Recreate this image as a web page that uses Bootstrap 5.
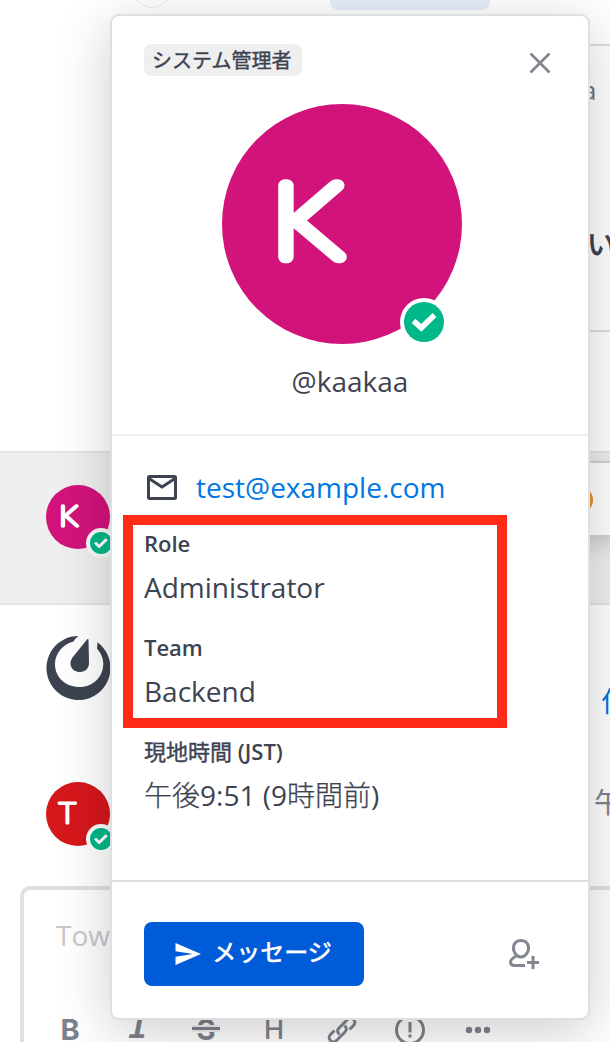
<!DOCTYPE html>
<html lang="ja">
<head>
<meta charset="utf-8">
<meta name="viewport" content="width=device-width, initial-scale=1">
<title>プロフィール</title>
<link rel="stylesheet" href="https://cdn.jsdelivr.net/npm/bootstrap@5.3.0/dist/css/bootstrap.min.css">
<style>
body{font-family:"Open Sans","Noto Sans CJK JP",sans-serif;font-size:28px;line-height:40px;color:#3d4350;background:#fff}
svg{display:block;flex:none}
.channel{height:1042px}
.thread-top{height:451px}
.reply-count{width:160px;height:10px;margin-left:330px;background:#e8effa;border-radius:0 0 8px 8px}
.ghost-icon{left:132px;top:-32px;width:40px;height:40px;border:1px solid #eee}
.quote{height:288px;margin-top:34px;margin-left:560px;border-top:2px solid #dcdddf;border-bottom:2px solid #dcdddf}
.who{font-size:26px;color:#6f747e;padding-left:22px;padding-top:24px;line-height:40px}
.headline{font-weight:400;-webkit-text-stroke:1px #3d4350;font-size:28px;padding-left:27px;padding-top:114px;line-height:40px}
.hovered{height:154px;background:#efefef;border-top:2px solid #e3e4e6;border-bottom:2px solid #e3e4e6;padding:32px 0 0 46px}
.post-mm{height:147px;padding:31px 0 0 46px}
.post-t{height:134px;padding:30px 0 0 46px}
.ava{width:64px;height:64px}
.state-sm{left:40px;top:43px}
.post-t .state-sm{top:42px}
.actions{width:60px;height:76px;margin-top:-24px;margin-right:-10px;background:#fff;border:2px solid #d0d1d6;box-shadow:0 8px 18px rgba(0,0,0,.14);padding-top:24px;padding-left:5px}
.emoji{width:26px;height:26px;background:radial-gradient(circle,#ffc34a 30%,#e8861c 70%)}
.clip-link{color:#0076e4;width:9px;margin-top:45px}
.clip-time{color:#7d828c;width:16px}
.composer{height:170px;margin-left:20px;margin-right:-20px;border:4px solid #dfe0e2;border-radius:10px;padding:23px 0 0 32px}
.hint{color:#c7c8ca;line-height:44px}
.tools{height:40px;margin-top:53px;color:#7d828c;line-height:40px;margin-left:-10px}
.tools>span{width:68px}
.tools>.t-b{width:48px;font:700 29px/38px Inter,sans-serif}
.tools>.t-i{font:italic 700 33px/38px "Liberation Mono",monospace;margin-left:10px}
.t-s{font:700 29px/38px Inter,sans-serif}
.t-h{font:500 27px/40px Inter,sans-serif}
.strike{left:-5px;top:14px}
.profile{left:110px;top:14px;width:480px;height:1006px;border:2px solid #dedfe1;border-radius:9px;box-shadow:0 12px 56px rgba(0,0,0,.20);z-index:5}
.head{height:420px;border-bottom:2px solid #efeff0}
.head-bar{height:60px;padding:28px 32px 0}
.role-tag{background:#efefef;border-radius:8px;height:32px;font-size:20px;line-height:31px;padding:0 11px 0 8px;font-family:"Noto Sans CJK JP",sans-serif;font-weight:400;-webkit-text-stroke:.4px #3d4350}
.close-x{margin:7px 4px 0 0;height:24px}
.portrait{width:240px;height:240px;margin:28px 0 0 110px}
.state-lg{left:178px;top:194px}
.handle{margin-top:17px;line-height:40px}
.details{height:446px;border-bottom:2px solid #dcdde1;padding:31px 32px 0}
.mail{height:40px}
.mail svg{margin-top:2px}
.mail a{color:#0076e4;text-decoration:none}
.attr{font-size:22px;line-height:32px;font-weight:600}
.attr-ja{font-weight:400;-webkit-text-stroke:.4px #3d4350}
.val{line-height:40px}
.val-ja{font-family:"Open Sans","Noto Sans CJK JP Light","Noto Sans CJK JP",sans-serif}
.val-ja span{-webkit-text-stroke:.25px #3d4350}
.focus-box{left:11px;top:499px;width:384px;height:213px;border:10px solid #ff2a17}
.foot{padding:40px 48px 0 32px}
.send{width:220px;height:64px;border:0;border-radius:8px;background:#005bd8;color:#fff;font-size:24px;line-height:60px;font-weight:400;-webkit-text-stroke:.6px #fff}
.send:hover{background:#0054c7;color:#fff}
.send-text{margin-left:11px;margin-right:1px;padding-bottom:5px}
.letter{font-family:Lato,sans-serif;fill:#fff;stroke:#fff;stroke-linejoin:round}
</style>
</head>
<body>
<svg width="0" height="0" class="position-absolute">
  <symbol id="online" viewBox="0 0 48 48"><circle cx="24" cy="24" r="24" fill="#fff"/><circle cx="24" cy="24" r="20" fill="#00b889"/><path d="M13.500 22.800l7.800 7L34.500 17" fill="none" stroke="#fff" stroke-width="5.600"/></symbol>
</svg>

<main class="channel position-relative overflow-hidden">
  <section class="thread-top overflow-hidden position-relative">
    <div class="ghost-icon position-absolute rounded-circle"></div>
    <div class="reply-count"></div>
    <div class="quote">
      <div class="who">a</div>
      <div class="headline text-nowrap">いい</div>
    </div>
  </section>

  <section class="hovered d-flex justify-content-between">
    <div class="ava position-relative">
      <svg width="64" height="64" viewBox="0 0 240 240"><circle cx="120" cy="120" r="120" fill="#d2137b"/><text class="letter" transform="translate(50 152.500) scale(1.120 1.010)" font-size="102" font-weight="100" stroke-width="12.500">K</text></svg>
      <svg class="state-sm position-absolute" width="30" height="30" viewBox="0 0 30 30"><circle cx="15" cy="15" r="15" fill="#fafafa"/><circle cx="15" cy="15" r="11" fill="#00b889"/><path d="M9 14.500l4.200 4 7.600-7.300" fill="none" stroke="#fff" stroke-width="3"/></svg>
    </div>
    <div class="actions d-flex"><div class="emoji rounded-circle"></div></div>
  </section>

  <section class="post-mm d-flex justify-content-between">
    <svg width="64" height="64" viewBox="0 0 64 64" fill="#3d4350"><path d="M32.500 0A32 32 0 1 0 51.500 6.300L51 12.500C55 17 57.300 22 57.300 27.500 57.300 41 47 51 34 51 19.500 51 9 41.500 9 28 9 17.500 17 8 27.500 5.500Q29 2.500 32.500 0z"/><path d="M41.200 3.200L26.500 21.500C21.500 29 26.500 36 34 36 39.500 36 43 32 43 27L42.500 3.700q-.5-1.200-1.300-.5z"/></svg>
    <a class="clip-link text-decoration-none text-nowrap">作</a>
  </section>

  <section class="post-t d-flex justify-content-between">
    <div class="ava position-relative">
      <svg width="64" height="64" viewBox="0 0 240 240"><circle cx="120" cy="120" r="120" fill="#d6171b"/><text class="letter" transform="translate(49 153) scale(1.080 1)" font-size="102" font-weight="100" stroke-width="12">T</text></svg>
      <svg class="state-sm position-absolute" width="30" height="30" viewBox="0 0 30 30"><circle cx="15" cy="15" r="15" fill="#fff"/><circle cx="15" cy="15" r="11" fill="#00b889"/><path d="M9 14.500l4.200 4 7.600-7.300" fill="none" stroke="#fff" stroke-width="3"/></svg>
    </div>
    <span class="clip-time text-nowrap">午後</span>
  </section>

  <section class="composer">
    <div class="hint">Town</div>
    <div class="tools d-flex align-items-center">
      <span class="t-b text-center">B</span>
      <span class="t-i text-center">I</span>
      <span class="t-s text-center"><span class="d-inline-flex position-relative">S<svg class="strike position-absolute" width="28" height="7"><path d="M0 0h28v7H0z" fill="#f0f0f0"/><path d="M0 2h28v3H0z" fill="#7d828c"/></svg></span></span>
      <span class="t-h text-center">H</span>
      <span><svg class="m-auto" width="32" height="32" viewBox="0 0 32 32" fill="none" stroke="#7d828c" stroke-width="3"><path d="M13.500 20.500c-3-3-2-5 0-7l8-8c4-4 10 2 6 6l-4 4M18.500 11.500c3 3 2 5 0 7l-8 8c-4 4-10-2-6-6l4-4"/></svg></span>
      <span><svg class="m-auto" width="32" height="32" viewBox="0 0 32 32" fill="none" stroke="#7d828c" stroke-width="3"><circle cx="16" cy="16" r="13.500"/><path d="M16 8v10.500M16 20.500v3"/></svg></span>
      <span><svg class="m-auto" width="26" height="8" fill="#7d828c"><circle cx="4" cy="4" r="3.200"/><circle cx="13" cy="4" r="3.200"/><circle cx="22" cy="4" r="3.200"/></svg></span>
    </div>
  </section>

  <aside class="profile position-absolute bg-white">
    <header class="head">
      <div class="head-bar d-flex justify-content-between align-items-start">
        <span class="role-tag">システム管理者</span>
        <svg class="close-x" width="24" height="24" viewBox="0 0 24 24"><path d="M2.500 2.500l19 19M21.500 2.500l-19 19" stroke="#818690" stroke-width="2.800"/></svg>
      </div>
      <div class="portrait position-relative">
        <svg width="240" height="240" viewBox="0 0 240 240"><circle cx="120" cy="120" r="120" fill="#d2137b"/><text class="letter" transform="translate(50 152.500) scale(1.120 1.010)" font-size="102" font-weight="100" stroke-width="12.500">K</text></svg>
        <svg class="state-lg position-absolute" width="48" height="48"><use href="#online"/></svg>
      </div>
      <div class="handle text-center">@kaakaa</div>
    </header>
    <div class="details">
      <div class="mail d-flex align-items-center">
        <svg width="36" height="28" viewBox="0 0 36 28" fill="none" stroke="#3d4350" stroke-width="3"><rect x="4.500" y="2.500" width="27" height="22" rx="1"/><path d="M5 4.500l13 8.500 13-8.500"/></svg>
        <a class="ms-3" href="#">test@example.com</a>
      </div>
      <div class="attr mt-3 pt-1">Role</div>
      <div class="val mt-2">Administrator</div>
      <div class="attr mt-4">Team</div>
      <div class="val mt-2">Backend</div>
      <div class="attr mt-4"><span class="attr-ja">現地時間</span> (JST)</div>
      <div class="val val-ja mt-2"><span>午後</span>9:51 (9<span>時間前</span>)</div>
    </div>
    <footer class="foot d-flex justify-content-between align-items-center">
      <button class="send btn d-flex align-items-center justify-content-center p-0" type="button">
        <svg width="26" height="22" viewBox="0 0 26 22" fill="#fff"><path d="M.5 0L26 11 .5 22v-8.200L18 11 .5 8.200z"/></svg>
        <span class="send-text">メッセージ</span>
      </button>
      <svg width="32" height="32" viewBox="0 0 32 32" fill="none" stroke="#818690" stroke-width="3"><path d="M9 17.500C3 12 5 2.500 13 2.500s10 9.500 4 15q-4 3-8 0C5 20 2.500 21 2.500 24q0 3.500 4 3.500H17M25 18v13M19 24.500h12"/></svg>
    </footer>
    <div class="focus-box position-absolute"></div>
  </aside>
</main>
<script src="https://cdn.jsdelivr.net/npm/bootstrap@5.3.0/dist/js/bootstrap.bundle.min.js"></script>
</body>
</html>
